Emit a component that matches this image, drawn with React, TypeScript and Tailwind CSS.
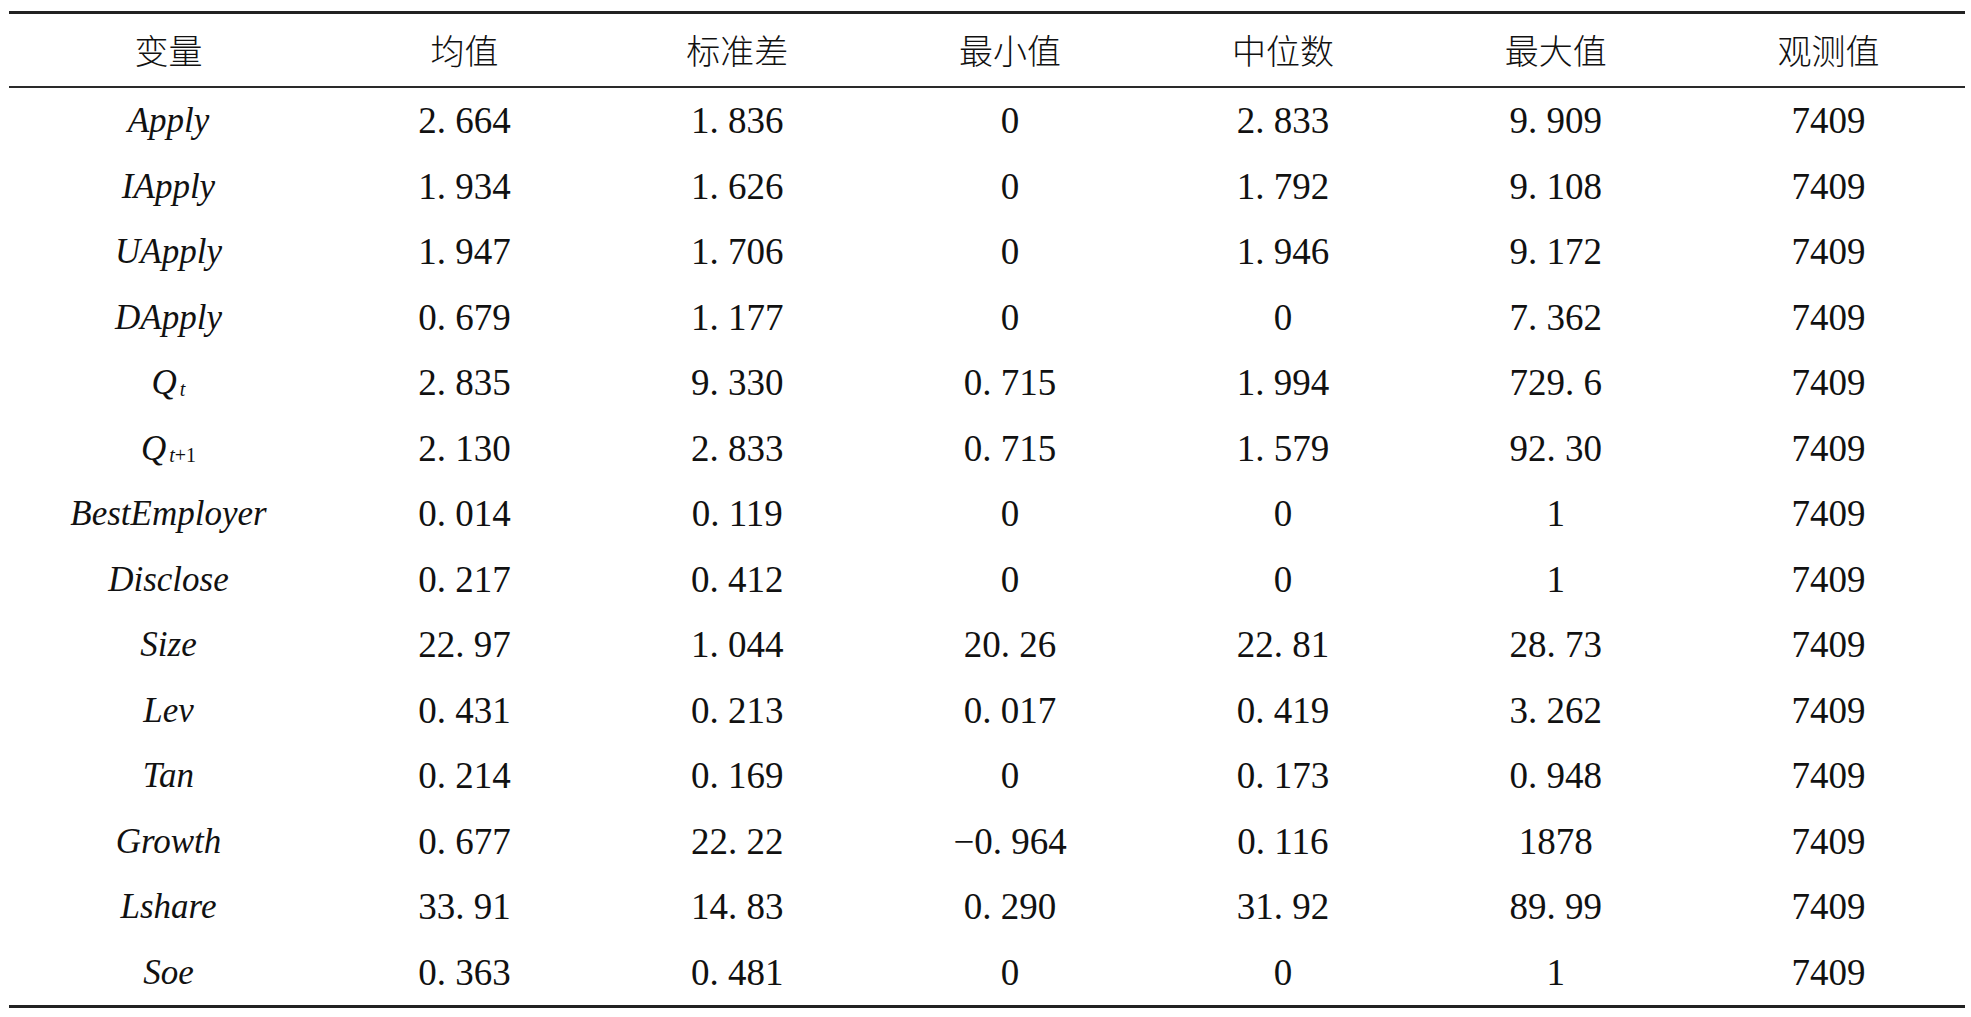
import React from "react";

type Row = {
  name: React.ReactNode;
  values: string[];
};

const headers = ["变量", "均值", "标准差", "最小值", "中位数", "最大值", "观测值"];

const rows: Row[] = [
  { name: "Apply", values: ["2. 664", "1. 836", "0", "2. 833", "9. 909", "7409"] },
  { name: "IApply", values: ["1. 934", "1. 626", "0", "1. 792", "9. 108", "7409"] },
  { name: "UApply", values: ["1. 947", "1. 706", "0", "1. 946", "9. 172", "7409"] },
  { name: "DApply", values: ["0. 679", "1. 177", "0", "0", "7. 362", "7409"] },
  {
    name: (
      <span>
        Q<sub className="text-[20px] not-italic ml-[3px] relative top-[2px]"><i>t</i></sub>
      </span>
    ),
    values: ["2. 835", "9. 330", "0. 715", "1. 994", "729. 6", "7409"],
  },
  {
    name: (
      <span>
        Q
        <sub className="text-[20px] not-italic ml-[3px] relative top-[2px]">
          <i>t</i>+1
        </sub>
      </span>
    ),
    values: ["2. 130", "2. 833", "0. 715", "1. 579", "92. 30", "7409"],
  },
  { name: "BestEmployer", values: ["0. 014", "0. 119", "0", "0", "1", "7409"] },
  { name: "Disclose", values: ["0. 217", "0. 412", "0", "0", "1", "7409"] },
  { name: "Size", values: ["22. 97", "1. 044", "20. 26", "22. 81", "28. 73", "7409"] },
  { name: "Lev", values: ["0. 431", "0. 213", "0. 017", "0. 419", "3. 262", "7409"] },
  { name: "Tan", values: ["0. 214", "0. 169", "0", "0. 173", "0. 948", "7409"] },
  { name: "Growth", values: ["0. 677", "22. 22", "\u22120. 964", "0. 116", "1878", "7409"] },
  { name: "Lshare", values: ["33. 91", "14. 83", "0. 290", "31. 92", "89. 99", "7409"] },
  { name: "Soe", values: ["0. 363", "0. 481", "0", "0", "1", "7409"] },
];

const App: React.FC = () => {
  return (
    <div className="w-[1971px] h-[1017px] bg-white pt-[11px] pl-[9px] text-[#111] font-['Liberation_Serif','Noto_Sans_CJK_SC',serif]">
      <div className="w-[1956px] border-t-[3px] border-b-[3px] border-[#222]">
        {/* header */}
        <div className="grid grid-cols-[319px_repeat(6,1fr)] h-[74px] items-center border-b-[2px] border-[#2a2a2a]">
          {headers.map((h) => (
            <div
              key={h}
              className="text-center text-[34px] leading-none font-['Noto_Sans_CJK_SC',sans-serif] font-light"
            >
              {h}
            </div>
          ))}
        </div>
        {/* body */}
        {rows.map((r, i) => (
          <div key={i} className="grid grid-cols-[319px_repeat(6,1fr)] h-[65.5px] items-center">
            <div className="text-center text-[35px] leading-none italic">{r.name}</div>
            {r.values.map((v, j) => (
              <div key={j} className="text-center text-[37px] leading-none">
                {v}
              </div>
            ))}
          </div>
        ))}
      </div>
    </div>
  );
};

export default App;
